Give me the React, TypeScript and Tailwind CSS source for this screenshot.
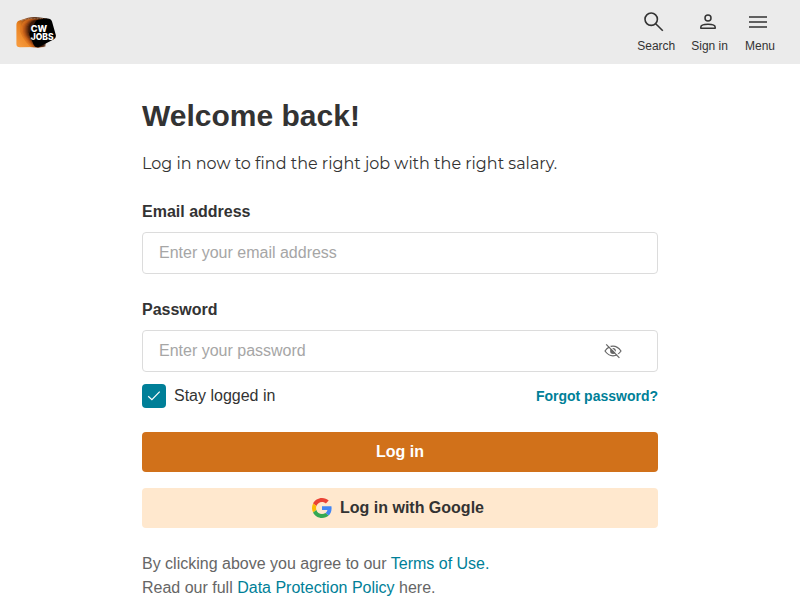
import type { ReactNode } from "react";

function Logo() {
  const rings = ["#e97f24", "#dc711c", "#bd5a18", "#9a4614", "#743310", "#4f220c", "#2d1307"];
  return (
    <svg width="40" height="32" viewBox="0 0 40 32" aria-label="CWJobs">
      <defs>
        <linearGradient id="glow" x1="0" y1="0.8" x2="0.9" y2="0.1">
          <stop offset="0" stopColor="#f6993c" />
          <stop offset="0.35" stopColor="#e8801f" />
          <stop offset="0.65" stopColor="#7d3a12" />
          <stop offset="1" stopColor="#1d0d05" />
        </linearGradient>
      </defs>
      <path
        d="M0.400 9Q0.400 5.500 3.500 4.600L12 1.800Q17 0.600 22 1.200L31 2.500L34 8L22 31L4 31.200Q0.400 31.200 0.400 28Z"
        fill="url(#glow)"
      />
      {rings.map((color, i) => (
        <path
          key={color}
          d="M26 3 L13 3 Q7 4 5 10 Q3.500 16 7 21 Q10 26 15 31 L22 30Z"
          fill={color}
          fillOpacity="0.700"
          stroke={i < 3 ? "#a34c16" : "#b55a1e"}
          strokeOpacity="0.600"
          strokeWidth="0.350"
          transform={`translate(${i * 1.2} ${i * 0.1})`}
        />
      ))}
      <path d="M5 4.600Q14 1.400 27 2.400" fill="none" stroke="#b89a83" strokeWidth="1" strokeDasharray="0.800 0.700" />
      <path
        d="M22.500 3.400 L31 2.500 Q35 2.300 36 5.500 L39.800 19 Q40.400 22.300 37.500 23.600 L23 31 Q19.500 32.200 17.800 29 L14 20.500 Q12.800 17.500 14.600 14.500 L19.200 6 Q20.400 3.500 22.500 3.400Z"
        fill="#000"
      />
      <text fill="#fff" fontFamily="Inter, sans-serif" fontWeight="800" fontSize="9">
        <tspan x="14.800" y="16.300" textLength="16.400" lengthAdjust="spacingAndGlyphs">CW</tspan>
        <tspan x="14.800" y="23.500" textLength="22.800" lengthAdjust="spacingAndGlyphs">JOBS</tspan>
      </text>
    </svg>
  );
}

function NavItem({ label, children }: { label: string; children: ReactNode }) {
  return (
    <a className="flex flex-col items-center text-xs leading-4 text-[#333]">
      <span className="mb-1 flex h-6 items-center">{children}</span>
      {label}
    </a>
  );
}

function Header() {
  return (
    <header className="flex h-16 items-start justify-between bg-[#ebebeb] pt-[10px] pr-[25px] pl-4">
      <div className="pt-[6px]">
        <Logo />
      </div>
      <nav className="flex">
        <NavItem label="Search">
          <svg className="ml-[-6px]" width="24" height="24" viewBox="0 0 24 24" fill="none" stroke="#333" strokeWidth="1.600">
            <circle cx="10.200" cy="9.200" r="6.200" />
            <path d="M14.700 13.700 21.800 20.800" />
          </svg>
        </NavItem>
        <div className="ml-4">
          <NavItem label="Sign in">
            <svg className="ml-[-3px]" width="24" height="24" viewBox="0 0 24 24" fill="none" stroke="#333" strokeWidth="1.500">
              <circle cx="12" cy="8" r="3" />
              <path d="M4.800 18.300v-1c0-1.800 3.400-3 7.200-3s7.200 1.200 7.200 3v1Z" strokeLinejoin="round" />
            </svg>
          </NavItem>
        </div>
        <div className="ml-[17px]">
          <NavItem label="Menu">
            <svg className="ml-[-3px]" width="24" height="24" viewBox="0 0 24 24" fill="none" stroke="#333" strokeWidth="1.500">
              <path d="M3 7h18M3 12h18M3 17h18" />
            </svg>
          </NavItem>
        </div>
      </nav>
    </header>
  );
}

function HiddenEye() {
  return (
    <svg width="18" height="18" viewBox="0 0 18 18" fill="none" stroke="#666" strokeWidth="1.200">
      <path d="M1 9C3.200 6 6 4.200 9 4.200s5.800 1.800 8 4.800c-2.200 3.200-5 4.800-8 4.800S3.200 12.200 1 9Z" />
      <circle cx="9" cy="9" r="2.900" fill="#666" stroke="none" />
      <path d="M3.200 1.800 16 14.600" stroke="#fff" strokeWidth="1.200" />
      <path d="M2.200 2.400 15.400 15.800" strokeWidth="1.200" />
    </svg>
  );
}

function GoogleIcon() {
  return (
    <svg width="20" height="20" viewBox="0 0 48 48">
      <path fill="#EA4335" d="M24 9.500c3.540 0 6.710 1.220 9.210 3.600l6.850-6.850C35.900 2.380 30.470 0 24 0 14.620 0 6.510 5.380 2.560 13.220l7.980 6.190C12.430 13.720 17.740 9.500 24 9.500z" />
      <path fill="#4285F4" d="M46.980 24.550c0-1.570-.15-3.090-.38-4.550H24v9.020h12.940c-.58 2.960-2.260 5.480-4.780 7.180l7.730 6c4.510-4.180 7.090-10.360 7.090-17.650z" />
      <path fill="#FBBC05" d="M10.530 28.590c-.48-1.450-.76-2.990-.76-4.590s.27-3.140.76-4.590l-7.980-6.190C.92 16.460 0 20.120 0 24c0 3.880.92 7.540 2.560 10.780l7.970-6.190z" />
      <path fill="#34A853" d="M24 48c6.480 0 11.930-2.130 15.890-5.810l-7.730-6c-2.150 1.450-4.920 2.300-8.160 2.300-6.260 0-11.570-4.220-13.470-9.910l-7.980 6.190C6.510 42.620 14.620 48 24 48z" />
    </svg>
  );
}

export default function App() {
  return (
    <div className="h-[600px] overflow-hidden bg-white font-['Liberation_Sans',Arial,sans-serif] text-base leading-6 text-[#333]">
      <Header />
      <main className="mx-auto w-[516px] pt-8">
        <h1 className="text-[30px] leading-10 font-bold">Welcome back!</h1>
        <p className="mt-4 font-['Montserrat','Inter',sans-serif] whitespace-nowrap">
          Log in now to find the right job with the right salary.
        </p>

        <form onSubmit={(e) => e.preventDefault()}>
          <label className="mt-6 block font-bold" htmlFor="email">Email address</label>
          <input
            id="email"
            className="mt-2 block h-[42px] w-full rounded border border-[#dcdcdc] px-4 placeholder:text-[#a6a6a6]"
            placeholder="Enter your email address"
          />
          <label className="mt-6 block font-bold" htmlFor="password">Password</label>
          <div className="mt-2 flex h-[42px] items-center rounded border border-[#dcdcdc] pr-[35px] pl-4">
            <input
              id="password"
              type="password"
              className="min-w-0 flex-1 placeholder:text-[#a6a6a6]"
              placeholder="Enter your password"
            />
            <HiddenEye />
          </div>

          <div className="mt-3 flex items-center">
            <span className="mr-2 flex size-6 items-center justify-center rounded bg-[#007f98]">
              <svg width="16" height="16" viewBox="0 0 16 16" fill="none" stroke="#fff" strokeWidth="1.200">
                <path d="m2.200 8.200 3.700 3.500 7.800-8" />
              </svg>
            </span>
            Stay logged in
            <a className="ml-auto text-sm font-bold text-[#007f98]">Forgot password?</a>
          </div>

          <button className="mt-6 block h-10 w-full rounded bg-[#d1711a] font-bold text-white">Log in</button>
          <button className="mt-4 flex h-10 w-full items-center justify-center gap-2 rounded bg-[#ffe8ce] pr-1 font-bold">
            <GoogleIcon />
            Log in with Google
          </button>
        </form>

        <p className="mt-6 text-[#666]">
          By clicking above you agree to our <a className="text-[#007f98]">Terms of Use.</a>
          <br />
          Read our full <a className="text-[#007f98]">Data Protection Policy</a> here.
        </p>
      </main>
    </div>
  );
}
